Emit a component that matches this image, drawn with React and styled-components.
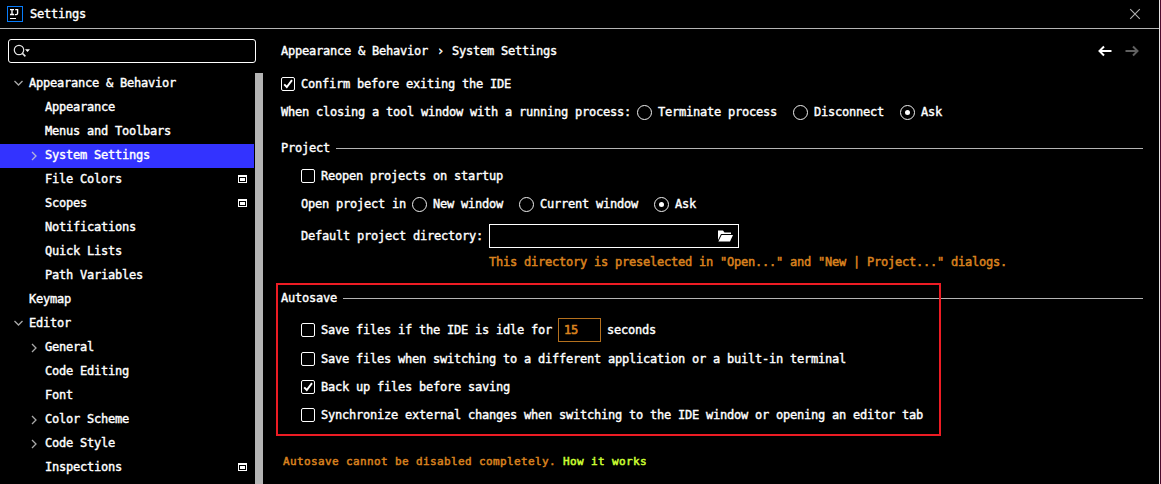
import React from 'react';
import styled, { createGlobalStyle } from 'styled-components';

const GlobalStyle = createGlobalStyle`
  * { box-sizing: border-box; }
  body { margin: 0; background: #000; overflow: hidden; }
`;

const Window = styled.div`
  width: 1161px;
  height: 484px;
  display: flex;
  flex-direction: column;
  overflow: hidden;
  background: #000;
  color: #fff;
  border-right: 1px solid #4d0a2c;
  box-shadow: inset -1px 0 0 #e6e6e6;
  font-family: 'DejaVu Sans Mono', monospace;
  font-size: 12px;
  line-height: 20px;
  letter-spacing: -0.2246px;
  -webkit-text-stroke: 0.4px currentColor;
  white-space: pre;
`;

const TitleBar = styled.header`
  height: 29px;
  flex: none;
  display: flex;
  align-items: center;
  padding: 0 18px 0 7px;
  margin-right: 1px;
  border-bottom: 1px solid #b4b4b4;
`;

const Title = styled.span`
  flex: 1;
  margin-left: 7px;
  padding-bottom: 1px;
`;

const Body = styled.div`
  display: flex;
  flex: 1;
  min-height: 0;
`;

const Sidebar = styled.aside`
  width: 263px;
  flex: none;
  display: flex;
  flex-direction: column;
`;

const SearchBox = styled.div`
  height: 24px;
  flex: none;
  margin: 10px 7px 9px 8px;
  padding-left: 4px;
  border: 1px solid #fff;
  border-radius: 3px;
  display: flex;
  align-items: center;
`;

const TreeArea = styled.div`
  display: flex;
  flex: 1;
  min-height: 0;
`;

const Tree = styled.div`
  width: 254px;
  overflow: hidden;
`;

const ScrollThumb = styled.div`
  width: 8px;
  margin: 1px 0 0 1px;
  background: #b4b4b4;
`;

const TreeRow = styled.div`
  height: 24px;
  display: flex;
  align-items: center;
  padding-left: ${(p) => (p.$level ? 29 : 13)}px;
  padding-right: 7px;
  background: ${(p) => (p.$selected ? '#3333ff' : 'transparent')};
`;

const Twisty = styled.span`
  width: 16px;
  height: 12px;
  flex: none;
  margin-bottom: ${(p) => (p.$open ? 2 : 1)}px;
`;

const Badge = styled.span`
  display: flex;
  padding-bottom: 2px;
`;

const TreeLabel = styled.span`
  flex: 1;
  padding-bottom: 2px;
`;

const Content = styled.main`
  flex: 1;
  padding: 0 17px 0 18px;
  display: flex;
  flex-direction: column;
`;

const Row = styled.div`
  flex: none;
  height: ${(p) => p.$h || 28}px;
  margin-top: ${(p) => p.$gap || 0}px;
  padding-left: ${(p) => p.$indent || 0}px;
  display: flex;
  align-items: center;
`;

const Breadcrumb = styled(Row)`
  padding: 2px 4px 0 0;
  justify-content: space-between;
`;

const Crumbs = styled.span`
  display: flex;
  padding-top: 1px;
`;

const Separator = styled.span`
  margin: 0 8px 0 9px;
`;

const NavArrows = styled.span`
  display: flex;
  gap: 13px;
`;

const Label = styled.span`
  padding-bottom: ${(p) => p.$lift || 0}px;
`;

const Rule = styled.div`
  flex: 1;
  height: 1px;
  margin-left: 6px;
  background: #b4b4b4;
`;

const Box = styled.span`
  width: 14px;
  height: 14px;
  flex: none;
  margin-right: 6px;
  border: 1px solid #fff;
  border-radius: 2px;
  display: flex;
`;

const Circle = styled.span`
  width: 15px;
  height: 15px;
  flex: none;
  margin: 0 6px 0 ${(p) => p.$before}px;
  border: 1px solid #f0f0f0;
  border-radius: 50%;
  display: flex;
  align-items: center;
  justify-content: center;
`;

const Dot = styled.span`
  width: 5px;
  height: 5px;
  border-radius: 50%;
  background: #fff;
`;

const PathField = styled.div`
  width: 250px;
  height: 24px;
  margin-left: 6px;
  padding-right: 5px;
  border: 1px solid #fff;
  display: flex;
  align-items: center;
  justify-content: flex-end;
`;

const NumberField = styled.span`
  width: 43px;
  height: 24px;
  margin: 0 6px;
  padding: 0 5px;
  line-height: 22px;
  border: 1px solid #b4701e;
  color: #d9821f;
  -webkit-text-stroke-width: 0.6px;
`;

const Hint = styled(Row)`
  color: #d9821f;
  -webkit-text-stroke-width: 0.5px;
`;

const Footer = styled(Row)`
  color: #d9821f;
  font-size: 11px;
  letter-spacing: 0.3775px;
  -webkit-text-stroke-width: 0.5px;
`;

const Link = styled.a`
  color: #ccff33;
`;

const AutosaveGroup = styled.section`
  position: relative;
`;

const Highlight = styled.div`
  position: absolute;
  left: -5px;
  top: 7px;
  width: 665px;
  height: 153px;
  border: 2px solid #ed1c24;
`;

const Check = () => (
  <svg width="12" height="12" viewBox="0 0 12 12" fill="none">
    <path d="M2.2 6.3 L4.8 9 L10 2.2" stroke="#fff" strokeWidth="1.9" />
  </svg>
);

const Chevron = ({ open, selected }) => (
  <svg width="12" height="12" viewBox="0 0 12 12" fill="none" style={{ display: 'block' }}>
    <path
      d={open ? 'M1.5 4 L5.5 8 L9.5 4' : 'M3 2 L7 6 L3 10'}
      stroke={selected ? '#b4b4dc' : '#a8a8a8'}
      strokeWidth="1.3"
    />
  </svg>
);

const ProjectBadge = () => (
  <svg width="9" height="8" viewBox="0 0 9 8" shapeRendering="crispEdges">
    <path d="M0 0H9V8H0Z M1 2V7H8V2Z" fill="#fff" fillRule="evenodd" />
    <path d="M2 3H7V6H2Z" fill="#fff" />
  </svg>
);

const Logo = () => (
  <svg width="16" height="16" viewBox="0 0 16 16" fill="none">
    <rect x="0.5" y="0.5" width="15" height="15" stroke="#087cfa" />
    <path d="M3 3.6H7 M5 3.6V8.5 M3 8.5H7 M8.2 3.6H10.6V7.2Q10.6 8.6 9.2 8.6H7.8" stroke="#fff" strokeWidth="1.35" />
    <path d="M3 12.5H9" stroke="#fff" />
  </svg>
);

const Magnifier = () => (
  <svg width="18" height="14" viewBox="0 0 18 14" fill="none">
    <circle cx="6" cy="6" r="4.7" stroke="#e6e6e6" strokeWidth="1.2" />
    <path d="M9.4 9.4 L12.4 12.4" stroke="#e6e6e6" strokeWidth="1.5" />
    <path d="M12 5.2H17L14.5 8Z" fill="#fff" />
  </svg>
);

const Arrow = ({ back }) => (
  <svg width="14" height="12" viewBox="0 0 14 12" fill="none">
    {back ? (
      <path d="M13.5 6H1.5 M6 1.5L1.5 6L6 10.5" stroke="#fff" strokeWidth="2" />
    ) : (
      <path d="M0.5 6H12.5 M8 1.5L12.5 6L8 10.5" stroke="#606060" strokeWidth="2" />
    )}
  </svg>
);

const Close = () => (
  <svg width="12" height="12" viewBox="0 0 12 12">
    <path d="M1.2 1.2L10.8 10.8M10.8 1.2L1.2 10.8" stroke="#b0b0b0" strokeWidth="1.1" />
  </svg>
);

const Folder = () => (
  <svg width="15" height="12" viewBox="0 0 15 12">
    <path d="M0 0.5H5L6.5 2.5H13V4H3L0 10Z" fill="#fff" />
    <path d="M3.6 5H15L12 11.5H0.4Z" fill="#fff" />
  </svg>
);

const Checkbox = ({ checked, children }) => (
  <>
    <Box>{checked && <Check />}</Box>
    <Label>{children}</Label>
  </>
);

const Radio = ({ checked, before = 15, children }) => (
  <>
    <Circle $before={before}>{checked && <Dot />}</Circle>
    <Label $lift={1}>{children}</Label>
  </>
);

const Section = ({ title, gap }) => (
  <Row $h={35} $gap={gap}>
    <Label $lift={1}>{title}</Label>
    <Rule />
  </Row>
);

const items = [
  { label: 'Appearance & Behavior', level: 0, state: 'open' },
  { label: 'Appearance', level: 1 },
  { label: 'Menus and Toolbars', level: 1 },
  { label: 'System Settings', level: 1, state: 'closed', selected: true },
  { label: 'File Colors', level: 1, badge: true },
  { label: 'Scopes', level: 1, badge: true },
  { label: 'Notifications', level: 1 },
  { label: 'Quick Lists', level: 1 },
  { label: 'Path Variables', level: 1 },
  { label: 'Keymap', level: 0 },
  { label: 'Editor', level: 0, state: 'open' },
  { label: 'General', level: 1, state: 'closed' },
  { label: 'Code Editing', level: 1 },
  { label: 'Font', level: 1 },
  { label: 'Color Scheme', level: 1, state: 'closed' },
  { label: 'Code Style', level: 1, state: 'closed' },
  { label: 'Inspections', level: 1, badge: true },
];

export default function App() {
  return (
    <>
      <GlobalStyle />
      <Window>
        <TitleBar>
          <Logo />
          <Title>Settings</Title>
          <Close />
        </TitleBar>
        <Body>
          <Sidebar>
            <SearchBox>
              <Magnifier />
            </SearchBox>
            <TreeArea>
              <Tree>
                {items.map((item) => (
                  <TreeRow key={item.label} $level={item.level} $selected={item.selected}>
                    <Twisty $open={item.state === 'open'}>
                      {item.state && <Chevron open={item.state === 'open'} selected={item.selected} />}
                    </Twisty>
                    <TreeLabel>{item.label}</TreeLabel>
                    {item.badge && (
                      <Badge>
                        <ProjectBadge />
                      </Badge>
                    )}
                  </TreeRow>
                ))}
              </Tree>
              <ScrollThumb />
            </TreeArea>
          </Sidebar>
          <Content>
            <Breadcrumb $h={41}>
              <Crumbs>
                <span>{'Appearance & Behavior'}</span>
                <Separator>›</Separator>
                <span>System Settings</span>
              </Crumbs>
              <NavArrows>
                <Arrow back />
                <Arrow />
              </NavArrows>
            </Breadcrumb>
            <Row>
              <Checkbox checked>Confirm before exiting the IDE</Checkbox>
            </Row>
            <Row $h={29}>
              <Label $lift={1}>When closing a tool window with a running process:</Label>
              <Radio before={6}>Terminate process</Radio>
              <Radio before={16}>Disconnect</Radio>
              <Radio before={16} checked>Ask</Radio>
            </Row>
            <Section title="Project" gap={4} />
            <Row $h={20} $indent={20}>
              <Checkbox>Reopen projects on startup</Checkbox>
            </Row>
            <Row $h={29} $gap={4} $indent={20}>
              <Label $lift={1}>Open project in</Label>
              <Radio before={6}>New window</Radio>
              <Radio before={16}>Current window</Radio>
              <Radio before={16} checked>Ask</Radio>
            </Row>
            <Row $h={24} $gap={5} $indent={20}>
              <Label>Default project directory:</Label>
              <PathField>
                <Folder />
              </PathField>
            </Row>
            <Hint $indent={208}>
              <Label>This directory is preselected in "Open..." and "New | Project..." dialogs.</Label>
            </Hint>
            <AutosaveGroup>
              <Section title="Autosave" gap={5} />
              <Row $h={24} $gap={2} $indent={20}>
                <Checkbox>Save files if the IDE is idle for</Checkbox>
                <NumberField>15</NumberField>
                <Label>seconds</Label>
              </Row>
              <Row $gap={3} $indent={20}>
                <Checkbox>Save files when switching to a different application or a built-in terminal</Checkbox>
              </Row>
              <Row $indent={20}>
                <Checkbox checked>Back up files before saving</Checkbox>
              </Row>
              <Row $indent={20}>
                <Checkbox>Synchronize external changes when switching to the IDE window or opening an editor tab</Checkbox>
              </Row>
              <Highlight />
            </AutosaveGroup>
            <Footer $h={24} $gap={21} $indent={2}>
              <span>
                Autosave cannot be disabled completely. <Link>How it works</Link>
              </span>
            </Footer>
          </Content>
        </Body>
      </Window>
    </>
  );
}
